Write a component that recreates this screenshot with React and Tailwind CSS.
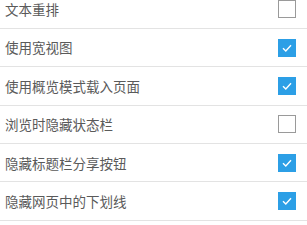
import React from "react";

const rows = [
  { label: "文本重排", checked: false },
  { label: "使用宽视图", checked: true },
  { label: "使用概览模式载入页面", checked: true },
  { label: "浏览时隐藏状态栏", checked: false },
  { label: "隐藏标题栏分享按钮", checked: true },
  { label: "隐藏网页中的下划线", checked: true },
];

const Check = ({ checked }) =>
  checked ? (
    <div className="w-[18px] h-[18px] bg-[#2c9fe6] flex items-center justify-center">
      <svg width="12" height="12" viewBox="0 0 12 12" fill="none">
        <path d="M2 6.2 L4.8 9 L10 3.2" stroke="white" strokeWidth="1.4" />
      </svg>
    </div>
  ) : (
    <div className="w-[18px] h-[18px] border border-[#9a9a9a] bg-white" />
  );

export default function App() {
  return (
    <div className="w-[307px] h-[225px] overflow-hidden bg-white font-['Noto_Sans_CJK_SC',sans-serif]">
      <div className="-mt-[9.5px]">
        {rows.map((r) => (
          <div
            key={r.label}
            className="h-[38.4px] flex items-center justify-between pl-[5px] pr-[11px] border-b border-[#e3e3e3]"
          >
            <span className="text-[13.5px] text-[#5a5a5a]">{r.label}</span>
            <Check checked={r.checked} />
          </div>
        ))}
      </div>
    </div>
  );
}
